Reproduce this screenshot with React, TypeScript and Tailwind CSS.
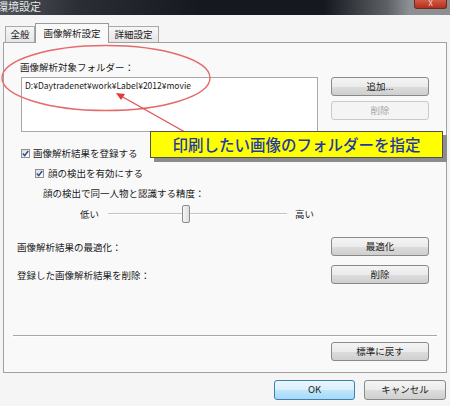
import React from "react";

const FONT = { fontFamily: '"Noto Sans CJK JP", "Noto Sans", sans-serif' };

function Btn({ label, disabled, primary, w = "w-[98px]", h = "h-[19px]" }: { label: string; disabled?: boolean; primary?: boolean; w?: string; h?: string }) {
  if (disabled) {
    return (
      <div className={`${w} ${h} flex items-center justify-center rounded-[3px] border border-[#c9c9c9] bg-[#f4f4f4] text-[9.5px] text-[#a6a6a6] leading-none`}>
        {label}
      </div>
    );
  }
  if (primary) {
    return (
      <div className={`${w} ${h} flex items-center justify-center rounded-[3px] border border-[#3c7fb1] bg-[linear-gradient(to_bottom,#eaf6fd_0%,#d9f0fc_50%,#bee6fd_51%,#a7d9f5_100%)] text-[9.5px] text-[#1a1a1a] leading-none`}>
        {label}
      </div>
    );
  }
  return (
    <div className={`${w} ${h} flex items-center justify-center rounded-[3px] border border-[#8a8a8a] bg-[linear-gradient(to_bottom,#f4f4f4_0%,#ebebeb_50%,#dddddd_51%,#cfcfcf_100%)] text-[9.5px] text-[#1a1a1a] leading-none`}>
      {label}
    </div>
  );
}

function Check() {
  return (
    <div className="w-[9px] h-[9px] border border-[#8e8f8f] bg-[linear-gradient(to_bottom_right,#dcdcdc,#ffffff)] flex items-center justify-center shrink-0">
      <svg width="7" height="7" viewBox="0 0 7 7">
        <path d="M0.8 3.6 L2.7 5.6 L6.2 1" stroke="#2a4f8a" strokeWidth="1.5" fill="none" />
      </svg>
    </div>
  );
}

export default function App() {
  return (
    <div className="w-[450px] h-[406px] relative overflow-hidden bg-[#f5f5f5] text-[#1a1a1a]" style={FONT}>
      {/* Title bar */}
      <div className="h-[15px] relative flex items-center bg-[linear-gradient(to_right,#50555b_0%,#2a2e34_18%,#15191f_45%,#15191f_72%,#5d6166_86%,#8d9093_91%)]">
        <span className="ml-[-3px] text-[11px] leading-none text-[#e6e6e6] mt-[-2px]">環境設定</span>
        <div className="absolute left-[414px] top-0 w-[33px] h-[9px] rounded-b-[3px] border border-t-0 border-[#6e2a20] bg-[linear-gradient(to_bottom,#d45a45,#b0301c)] flex items-center justify-center">
          <span className="text-[8px] leading-none text-[#f4dcd8] mt-[-3px]">X</span>
        </div>
      </div>

      {/* Tabs */}
      <div className="h-[27px] flex items-end pl-[5px] relative z-10">
        <div className="w-[30px] h-[16px] flex items-center justify-center border border-b-0 border-[#a9a9a9] bg-[linear-gradient(to_bottom,#f6f6f6,#e6e6e6)] text-[9.5px] leading-none">
          全般
        </div>
        <div className="w-[74px] h-[20px] mb-[-1px] flex items-center justify-center border border-b-0 border-[#999999] bg-[#f9f9f9] text-[9.5px] leading-none">
          画像解析設定
        </div>
        <div className="w-[50px] h-[16px] flex items-center justify-center border border-b-0 border-l-0 border-[#a9a9a9] bg-[linear-gradient(to_bottom,#f6f6f6,#e6e6e6)] text-[9.5px] leading-none">
          詳細設定
        </div>
      </div>

      {/* Panel */}
      <div className="ml-[3px] w-[444px] h-[331px] border border-[#a0a0a0] bg-[#f9f9f9] flex flex-col pl-[13px] pr-[17px] text-[9.5px] leading-[12px]">
        <div className="mt-[18px] ml-[3px] h-[12px]">画像解析対象フォルダー：</div>
        <div className="mt-[4px] flex justify-between">
          <div className="ml-[4px] w-[297px] h-[55px] border border-[#a8a8a8] bg-white pl-[3px] pt-[1px] text-[8.5px] leading-[12px] tracking-[0px]">
            D:¥Daytradenet¥work¥Label¥2012¥movie
          </div>
          <div className="flex flex-col gap-[5px]">
            <Btn label="追加..." />
            <Btn label="削除" disabled />
          </div>
        </div>
        <div className="mt-[15px] ml-[4px] h-[12px] flex items-center gap-[3px]">
          <Check />
          <span>画像解析結果を登録する</span>
        </div>
        <div className="mt-[8px] ml-[18px] h-[12px] flex items-center gap-[4px]">
          <Check />
          <span>顔の検出を有効にする</span>
        </div>
        <div className="mt-[8px] ml-[26px] h-[12px]">顔の検出で同一人物と認識する精度：</div>
        <div className="mt-[5px] ml-[63px] h-[20px] flex items-center">
          <span className="w-[28px]">低い</span>
          <div className="relative w-[179px] h-[20px] flex items-center">
            <div className="w-full h-[2px] border-t border-[#c4c4c4] bg-white" />
            <div className="absolute left-[74px] top-[1px] w-[8px] h-[18px] rounded-[2px] border border-[#8c8c8c] bg-[linear-gradient(to_right,#f4f4f4,#dedede)]" />
          </div>
          <span className="ml-[8px]">高い</span>
        </div>
        <div className="mt-[13px] h-[19px] flex items-center justify-between">
          <span>画像解析結果の最適化：</span>
          <Btn label="最適化" />
        </div>
        <div className="mt-[9px] h-[19px] flex items-center justify-between">
          <span>登録した画像解析結果を削除：</span>
          <Btn label="削除" />
        </div>
        <div className="mt-[51px] ml-[-4px] mr-[-8px] h-[2px] border-t border-[#a8a8a8] bg-white" />
        <div className="mt-[5px] flex justify-end">
          <Btn label="標準に戻す" />
        </div>
      </div>

      {/* Bottom buttons */}
      <div className="mt-[7px] flex justify-end gap-[9px] pr-[4px]">
        <Btn label="OK" primary w="w-[81px]" h="h-[20px]" />
        <Btn label="キャンセル" w="w-[82px]" h="h-[20px]" />
      </div>

      {/* Annotation overlays */}
      <svg className="absolute left-0 top-0 pointer-events-none" width="450" height="406" viewBox="0 0 450 406">
        <ellipse cx="106" cy="78" rx="104" ry="32.5" fill="none" stroke="#e56a6a" strokeWidth="1.4" />
        <line x1="192" y1="136" x2="121" y2="96" stroke="#e05050" strokeWidth="1.3" />
        <polygon points="116,93 125,94 121,100" fill="#e03a3a" />
      </svg>
      <div className="absolute left-[150px] top-[131px] w-[293px] h-[27px] border border-[#505050] bg-[#ffff00] shadow-[4px_4px_0_#8c8c8c] flex items-center justify-center">
        <span className="text-[15.5px] leading-none font-medium text-[#1f3aa8]">印刷したい画像のフォルダーを指定</span>
      </div>
    </div>
  );
}
